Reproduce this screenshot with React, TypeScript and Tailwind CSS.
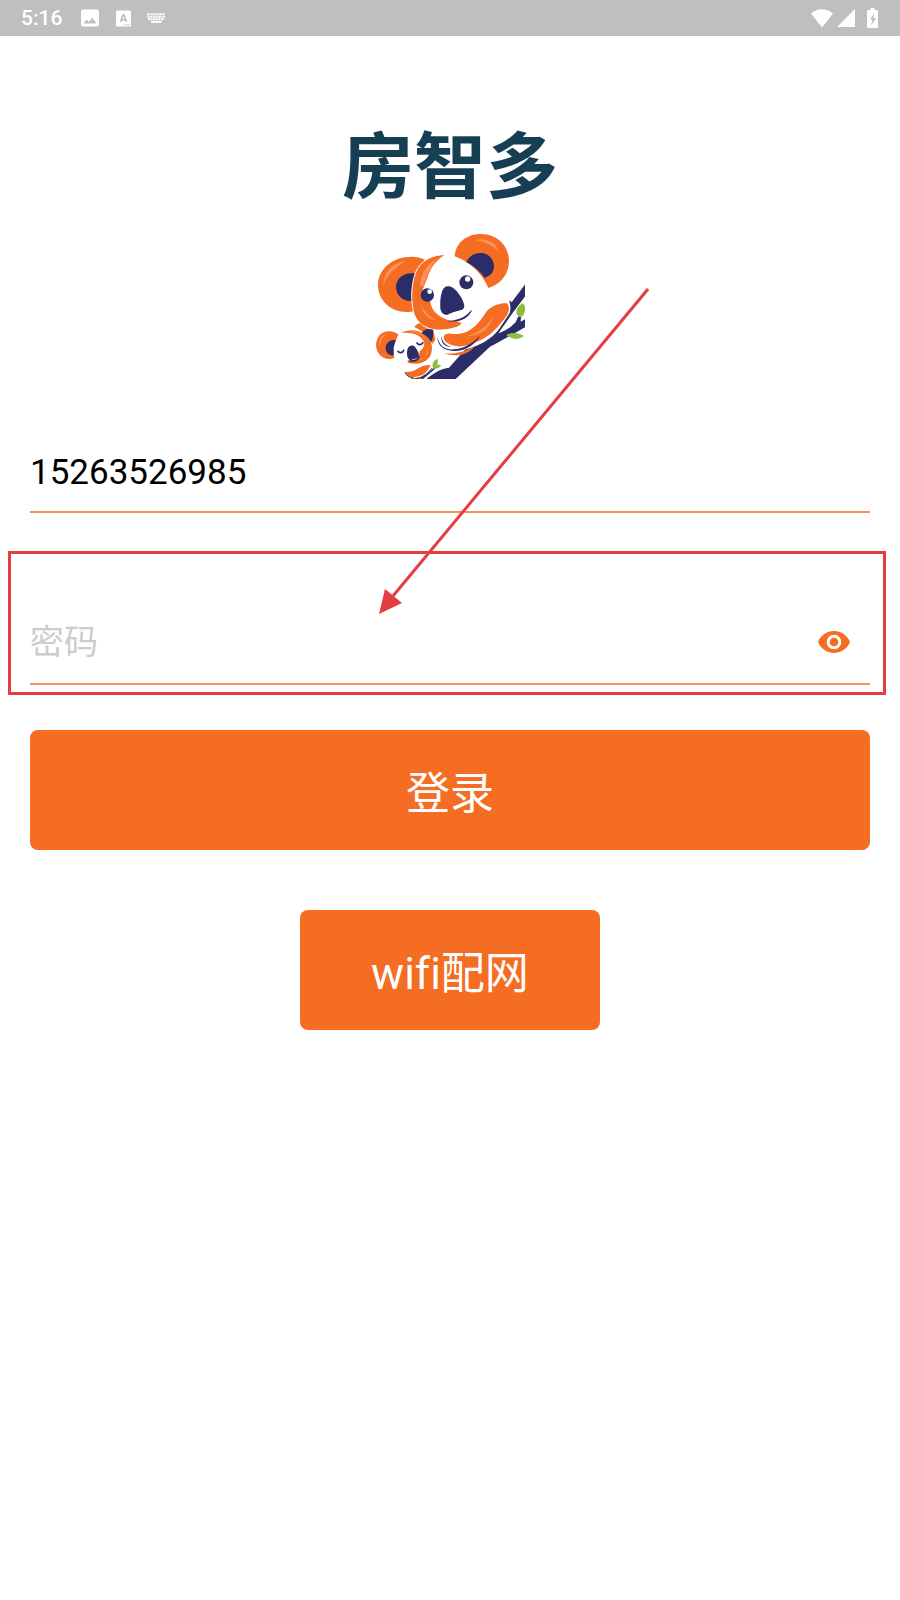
import { useState } from "react";

function StatusBar() {
    return (
        <header className="flex h-9 items-center bg-[#bfbfbf] pr-5 pl-[21px] text-white">
            <span className="text-[21px] leading-9 font-medium">5:16</span>
            <svg viewBox="0 0 18 18" className="ml-[19px] h-[18px] w-[18px]" fill="currentColor" aria-hidden="true">
                <path fillRule="evenodd" d="M2 0.500h14a2 2 0 0 1 2 2v13a2 2 0 0 1-2 2H2a2 2 0 0 1-2-2v-13a2 2 0 0 1 2-2zM2.500 14.500h13L11.300 8.800l-3.400 4.200-2.200-2.500z" />
            </svg>
            <svg viewBox="0 0 15 17" className="ml-[17px] h-[17px] w-[15px]" fill="currentColor" aria-hidden="true">
                <path fillRule="evenodd" d="M1.500 0.500h12a1.500 1.500 0 0 1 1.500 1.500v13a1.500 1.500 0 0 1-1.500 1.500h-12A1.500 1.500 0 0 1 0 15V2A1.500 1.500 0 0 1 1.500 0.500zM6.500 4L3.500 12h1.800l.6-1.600h3.200l.6 1.600h1.800L8.500 4zM7.500 6.200l1 2.800h-2zM8 14v1.200h1.200V14zM10.200 14v1.200h1.200V14zM12.400 14v1.200h1.200V14z" />
            </svg>
            <svg viewBox="0 0 18 10" className="ml-4 h-[10px] w-[18px]" aria-hidden="true">
                <g stroke="#fff" strokeWidth="2" fill="none">
                    <path d="M0 1.200h18" strokeDasharray="2 .6" />
                    <path d="M.4 3.700h17.400" strokeDasharray="2 .6" />
                    <path d="M1 6.200h16.400" strokeDasharray="2 .6" />
                    <path d="M4 8.900h10.500" />
                </g>
            </svg>
            <svg viewBox="0 0 22 19" className="ml-auto h-[19px] w-[22px]" fill="currentColor" aria-hidden="true">
                <path d="M0 4.500C6-1.200 16-1.200 22 4.500L11 18.500z" />
            </svg>
            <svg viewBox="0 0 18 18" className="ml-1 h-[18px] w-[18px]" fill="currentColor" aria-hidden="true">
                <path d="M18 0v18H0z" />
            </svg>
            <svg viewBox="0 0 11 20" className="mr-[2px] ml-3 h-5 w-[11px]" fill="currentColor" aria-hidden="true">
                <path fillRule="evenodd" d="M3.500 0h4v2H10a1 1 0 0 1 1 1v16a1 1 0 0 1-1 1H1a1 1 0 0 1-1-1V3a1 1 0 0 1 1-1h2.500zM7 5L3 11.500h2.300L4.300 17.500 9 10H6.200z" />
            </svg>
        </header>
    );
}

function KoalaLogo() {
    return (
        <svg viewBox="30 15 450 447" className="mt-[26px] h-[149px] w-[150px]" role="img" aria-label="koala">
            {/* branch */}
            <path fill="#2b2d68" d="M182 464C206 444 228 430 252 428L300 374C340 364 380 344 404 310L434 264C438 250 436 240 432 226L440 232L482 176V212L440 268L400 325C424 318 440 304 452 292L460 274L468 276L467 290L482 282V306L400 352L374 366L270 464z" />
            <path fill="#8dbf3f" d="M474 234C460 242 450 254 456 270C463 273 470 276 470 276C476 268 482 260 482 248zM424 330C440 320 462 324 476 333C462 345 440 345 424 330z" />
            {/* ears */}
            <path fill="#f46d22" d="M269 94C272 52 306 26 350 27C396 28 432 62 432 108C432 146 408 178 370 189C358 160 328 116 269 94z" />
            <path fill="#2b2d68" d="M304 112C312 92 332 82 350 84C372 86 387 104 387 124C387 142 376 154 358 158C346 140 326 122 304 112z" />
            <path fill="#ff9057" d="M330 45C364 36 396 54 402 82C386 62 362 50 330 45z" />
            <path fill="#f46d22" d="M180 104C162 95 140 93 120 97C72 104 39 140 39 180C39 226 78 262 126 261C134 261 140 260 146 258C138 220 145 150 180 104z" />
            <path fill="#2b2d68" d="M151 146C120 140 94 158 93 186C93 212 115 230 141 228C139 200 143 170 151 146z" />
            <path fill="#ff9057" d="M55 180C56 144 80 114 122 108C92 126 68 148 55 180z" />
            {/* face */}
            <path fill="#f46d22" stroke="#fff" strokeWidth="3" d="M242 89C204 88 166 105 151 144C136 190 138 234 148 270C164 306 200 320 244 314C268 310 284 306 291 295C282 285 262 288 242 281C212 270 199 250 197 226L172 200L188 160C198 126 216 104 242 89z" />
            <path fill="#ff9057" d="M164 182C168 146 186 116 216 101C196 126 184 150 176 182zM166 236C178 260 194 276 214 286C190 284 172 266 166 236z" />
            <circle cx="187" cy="210" r="20" fill="#2b2d68" />
            <circle cx="194" cy="200" r="7" fill="#fff" />
            <circle cx="304" cy="172" r="21" fill="#2b2d68" />
            <circle cx="308" cy="162" r="8" fill="#fff" />
            <path fill="#2b2d68" d="M230 204C234 188 242 183 252 184C272 186 296 224 298 242C298 250 294 254 286 256C270 260 258 264 246 270C236 270 228 264 226 250C225 232 226 216 230 204z" />
            <path fill="#2b2d68" d="M322 254C310 282 284 293 244 289C278 286 302 276 314 260z" />
            {/* big arm */}
            <path fill="#f46d22" d="M236 336C238 324 252 324 266 327C316 329 342 294 364 260C380 242 404 234 424 234C436 242 434 262 422 276C400 306 372 338 332 352C304 366 278 368 254 358C242 352 236 346 236 336z" />
            <path fill="#ff9057" d="M306 334C340 324 364 306 386 274C372 312 348 332 306 334z" />
            <path fill="#2b2d68" d="M217 334C222 364 240 376 268 373C302 370 326 352 347 330C328 362 300 378 270 378C238 378 216 364 217 334zM230 332C230 348 240 360 258 366C236 364 226 350 230 332z" />
            <path fill="#f46d22" d="M236 385C276 388 304 378 330 362C314 388 274 398 236 385z" />
            {/* baby */}
            <path fill="#f46d22" d="M148 306C154 296 164 292 168 296C178 307 190 312 205 315L211 344L202 357C192 334 172 318 148 306z" />
            <path fill="#2b2d68" d="M168 328C174 314 186 308 204 314C206 330 204 342 198 352C190 342 180 334 168 328z" />
            <path fill="#f46d22" d="M100 328C80 314 54 316 41 334C26 358 34 386 56 398C68 404 80 402 88 398L84 370L94 344z" />
            <path fill="#2b2d68" d="M92 346C76 342 62 354 62 370C62 384 74 393 86 391L86 366z" />
            <path fill="none" stroke="#ff9057" strokeWidth="5" strokeLinecap="round" d="M44 358C44 344 50 334 60 330" />
            <path fill="#f46d22" d="M108 324C128 312 158 312 176 328C202 342 206 370 196 392C184 414 158 420 130 414C126 410 126 406 132 405C156 406 164 392 164 378C174 374 182 358 176 348C164 328 138 320 108 324z" />
            <path fill="none" stroke="#ff9057" strokeWidth="3" strokeLinecap="round" d="M138 319C158 320 174 330 184 342M189 372C188 388 180 398 168 403" />
            <path fill="none" stroke="#2b2d68" strokeWidth="5" strokeLinecap="round" d="M99 379C103 385 113 384 116 376M156 354C160 361 170 360 174 353M136 408C148 409 158 405 162 397" />
            <path fill="#2b2d68" d="M127 374C130 362 144 358 150 366C158 376 164 388 161 396C154 402 144 400 138 406C128 404 124 392 127 374z" />
            <path fill="#f46d22" d="M134 440C156 438 166 418 196 420C190 440 174 454 148 456C130 456 120 450 118 441zM136 457C156 464 170 454 182 446L170 464H140z" />
            <path fill="none" stroke="#2b2d68" strokeWidth="3" d="M122 446C128 454 136 458 146 459M150 461C176 459 190 444 200 430" />
            <path fill="none" stroke="#2b2d68" strokeWidth="5" d="M168 464L208 430" />
            <path fill="#8dbf3f" d="M204 430C200 416 206 406 217 401C220 410 218 414 216 418C220 420 224 420 229 420C222 431 212 433 204 430z" />
        </svg>
    );
}

export default function App() {
    const [phone, setPhone] = useState("15263526985");
    const [password, setPassword] = useState("");
    const [visible, setVisible] = useState(false);

    return (
        <div className="relative min-h-screen bg-white font-[Roboto,'Noto_Sans_CJK_SC',sans-serif]">
            <StatusBar />
            <main className="flex flex-col items-center px-[30px] pt-24">
                <h1 className="text-[72px] leading-[72px] font-bold text-[#163f54]">房智多</h1>
                <KoalaLogo />

                <form className="mt-[54px] flex w-full flex-col items-center" onSubmit={(e) => e.preventDefault()}>
                    <input
                        type="tel"
                        aria-label="手机号"
                        value={phone}
                        onChange={(e) => setPhone(e.target.value)}
                        className="h-20 w-full border-b-2 border-[#f69458] text-[35px] text-black outline-none"
                    />

                    <div className="relative mt-[92px] flex h-20 w-full items-center border-b-2 border-[#f69458] pb-1">
                        <input
                            type={visible ? "text" : "password"}
                            aria-label="密码"
                            placeholder="密码"
                            value={password}
                            onChange={(e) => setPassword(e.target.value)}
                            className="h-full min-w-0 flex-1 text-[34px] text-black outline-none placeholder:text-[#cccccc]"
                        />
                        <button type="button" aria-label="显示密码" onClick={() => setVisible(!visible)} className="mr-5">
                            <svg viewBox="1 4.500 22 15" className="h-[22px] w-8" fill="#f46d22" aria-hidden="true">
                                <path d="M12 4.500C7 4.500 2.730 7.610 1 12c1.730 4.390 6 7.500 11 7.500s9.270-3.110 11-7.500c-1.730-4.390-6-7.500-11-7.500zM12 17c-2.760 0-5-2.240-5-5s2.240-5 5-5 5 2.240 5 5-2.240 5-5 5zm0-8c-1.660 0-3 1.340-3 3s1.340 3 3 3 3-1.340 3-3-1.340-3-3-3z" />
                            </svg>
                        </button>
                        <span className="pointer-events-none absolute -top-[54px] -right-4 -bottom-3 -left-[22px] border-3 border-[#e53e41]" />
                    </div>

                    <button type="submit" className="mt-[45px] h-[120px] w-full rounded-lg bg-[#f46d22] pt-2 text-[44px] text-white">
                        登录
                    </button>
                    <button type="button" className="mt-[60px] h-[120px] w-[300px] rounded-lg bg-[#f46d22] pt-2 text-[44px] text-white [font-variant-ligatures:none]">
                        wifi配网
                    </button>
                </form>
            </main>

            {/* arrow pointing at the password field */}
            <svg viewBox="0 0 270 326" className="pointer-events-none absolute top-[288px] left-[379px] h-[326px] w-[270px]" aria-hidden="true">
                <path d="M269 1L14 308" stroke="#e53e41" strokeWidth="3" />
                <path d="M0 326L6 301L23 315z" fill="#e53e41" />
            </svg>
        </div>
    );
}
